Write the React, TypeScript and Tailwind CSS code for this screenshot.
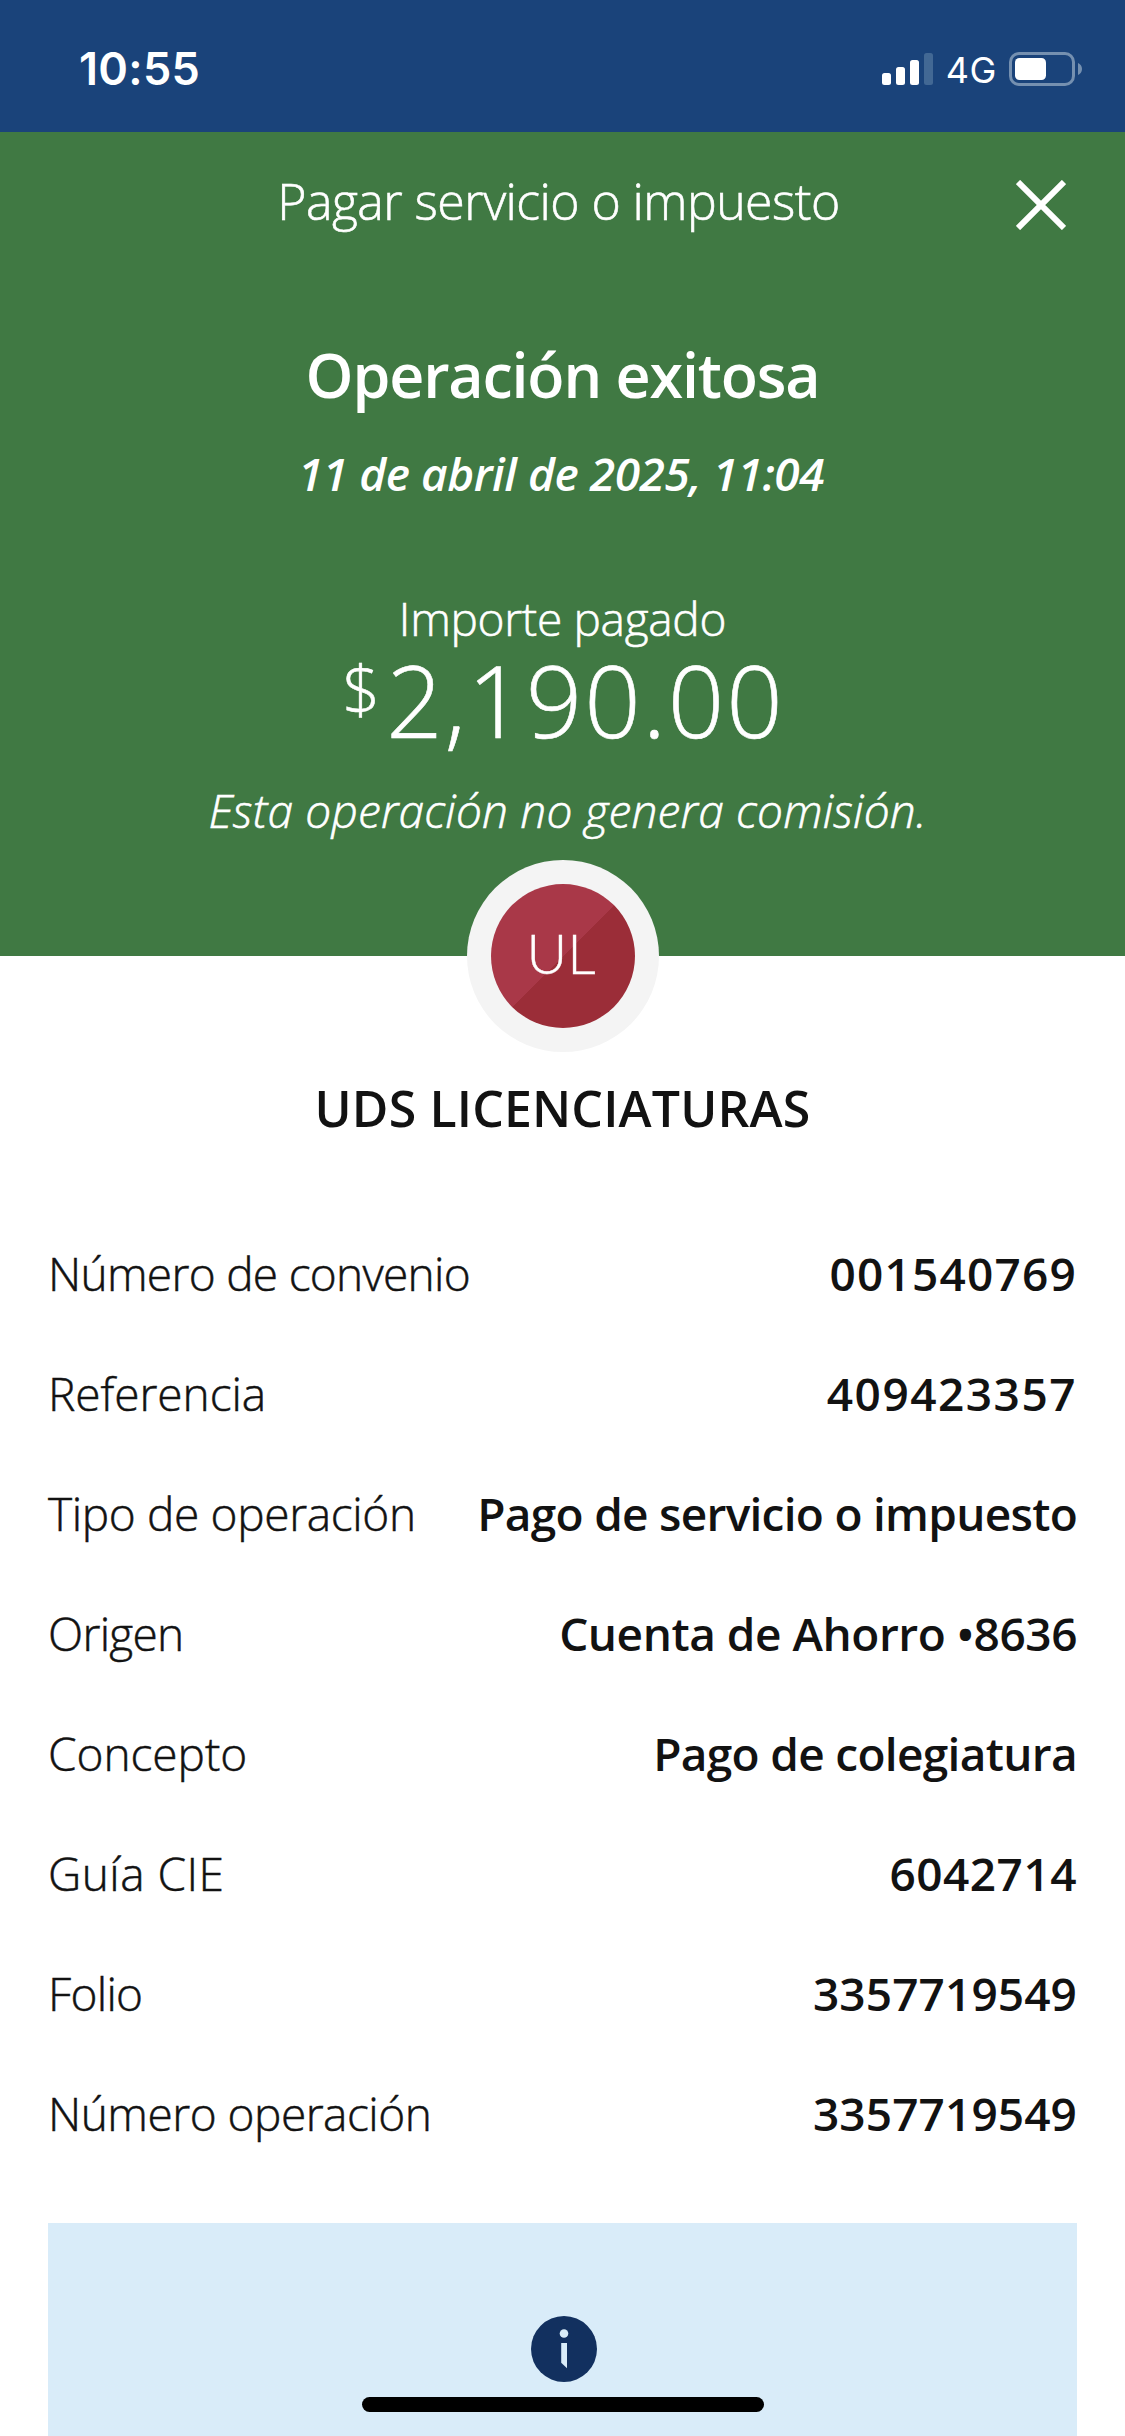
const details = [
    { label: 'Número de convenio', value: '001540769', labelClass: 'tracking-[-0.7px]', valueClass: 'tracking-[1.2px]' },
    { label: 'Referencia', value: '409423357', labelClass: 'tracking-[-0.05px]', valueClass: 'tracking-[1.5px]' },
    { label: 'Tipo de operación', value: 'Pago de servicio o impuesto', labelClass: 'tracking-[-0.35px]', valueClass: 'tracking-[-0.72px]' },
    { label: 'Origen', value: 'Cuenta de Ahorro •8636', labelClass: 'tracking-[-0.7px]', valueClass: 'tracking-[-0.46px]' },
    { label: 'Concepto', value: 'Pago de colegiatura', labelClass: 'tracking-[-0.05px]', valueClass: 'tracking-[-0.68px]' },
    { label: 'Guía CIE', value: '6042714', labelClass: 'tracking-[0.45px]', valueClass: 'tracking-[0.5px]' },
    { label: 'Folio', value: '3357719549', labelClass: 'tracking-[-0.7px]', valueClass: 'tracking-[0.1px]' },
    { label: 'Número operación', value: '3357719549', labelClass: 'tracking-[-0.5px]', valueClass: 'tracking-[0.1px]' },
];

const StatusBar = () => (
    <div className="flex h-[132px] items-center justify-between bg-[#1a437a] pt-[6px] pr-[43px] pl-[79px] font-['Inter',sans-serif] text-white">
        <span className="text-[45px] leading-[56px] font-semibold tracking-[0.3px]">10:55</span>
        <div className="flex items-center">
            <svg width="51" height="32" viewBox="0 0 51 32" fill="currentColor">
                <rect x="0" y="20" width="9" height="12" rx="2.5" />
                <rect x="14" y="14" width="9" height="18" rx="2.5" />
                <rect x="28" y="7" width="9" height="25" rx="2.5" />
                <rect x="42" y="0" width="9" height="32" rx="2.5" fill="#426894" />
            </svg>
            <span className="mt-[2px] ml-[13px] text-[36px] leading-[44px] tracking-[0.6px]">4G</span>
            <svg className="ml-[12px]" width="73" height="34" viewBox="0 0 73 34">
                <rect x="1.5" y="1.5" width="63" height="31" rx="8.5" fill="none" stroke="#7590b0" strokeWidth="3" />
                <rect x="6" y="6" width="31" height="22" rx="4.5" fill="#fff" />
                <path d="M69 11c2.400 1 4 3.300 4 6s-1.600 5-4 6z" fill="#7590b0" />
            </svg>
        </div>
    </div>
);

const Summary = () => (
    <section className="flex h-[824px] flex-col bg-[#407943] pt-[33px] text-center text-white">
        <div className="grid h-[72px] grid-cols-[50px_1fr_50px] items-center px-[59px]">
            <span />
            <h1 className="pr-2 text-[50px] leading-[72px] font-light tracking-[-0.56px] [-webkit-text-stroke:0.6px]">Pagar servicio o impuesto</h1>
            <button aria-label="Cerrar" className="pt-[7px]">
                <svg width="50" height="50" viewBox="0 0 50 50" fill="none" stroke="currentColor" strokeWidth="6">
                    <path d="M2 2l46 46M48 2L2 48" />
                </svg>
            </button>
        </div>
        <h2 className="mt-[98px] text-[61px] leading-[80px] font-semibold tracking-[-1.2px]">Operación exitosa</h2>
        <p className="mt-[26px] pr-[3px] text-[46px] leading-[64px] font-semibold tracking-[-0.45px] italic">11 de abril de 2025, 11:04</p>
        <p className="mt-[81px] text-[46px] leading-[64px] font-light tracking-[-0.3px] [-webkit-text-stroke:0.6px]">Importe pagado</p>
        <div className="mt-[1px] flex h-[98px] items-start justify-center gap-[6px] pl-[2px] font-light [-webkit-text-stroke:0.6px]">
            <span className="text-[66px] leading-[74px]">$</span>
            <span className="text-[99px] leading-[98px] tracking-[1.8px]">2,190.00</span>
        </div>
        <p className="mt-[29px] pl-[10px] text-[46px] leading-[64px] font-light tracking-[0.2px] italic [-webkit-text-stroke:0.6px]">Esta operación no genera comisión.</p>
    </section>
);

const Avatar = () => (
    <div className="relative mx-auto -mt-24 flex size-[192px] items-center justify-center rounded-full bg-[#f4f4f4]">
        <div className="flex size-36 items-center justify-center rounded-full bg-[linear-gradient(135deg,#a93848_50%,#9b2d38_50%)] pr-[3px] pb-[6px] font-['Lato',sans-serif] text-[56px] leading-none font-light text-white [-webkit-text-stroke:0.4px]">
            UL
        </div>
    </div>
);

const App = () => {
    return (
        <div className="relative h-[2436px] w-[1125px] overflow-hidden bg-white font-['Open_Sans',sans-serif] text-[#121212]">
            <StatusBar />
            <Summary />
            <Avatar />
            <h3 className="mt-5 text-center text-[50px] leading-[72px] font-semibold tracking-[0.15px]">UDS LICENCIATURAS</h3>

            <dl className="mt-[69px] px-12 text-[46px]">
                {details.map((item) => (
                    <div key={item.label} className="flex h-[120px] items-center justify-between">
                        <dt className={`font-light whitespace-nowrap [-webkit-text-stroke:0.5px] ${item.labelClass}`}>{item.label}</dt>
                        <dd className={`font-semibold whitespace-nowrap ${item.valueClass}`}>{item.value}</dd>
                    </div>
                ))}
            </dl>

            <div className="mx-12 mt-[50px] flex h-[260px] justify-center bg-[#d9ecf9] pt-[93px] pl-[3px]">
                <svg width="66" height="66" viewBox="0 0 66 66">
                    <circle cx="33" cy="33" r="33" fill="#12305f" />
                    <circle cx="33" cy="17.500" r="4.300" fill="#d9ecf9" />
                    <path d="M30.200 27h5.800v25.300l-5.800-5.600z" fill="#d9ecf9" />
                </svg>
            </div>

            {/* home indicator */}
            <div className="absolute bottom-6 left-[362px] h-[15px] w-[402px] rounded-full bg-black" />
        </div>
    );
};

export default App;
